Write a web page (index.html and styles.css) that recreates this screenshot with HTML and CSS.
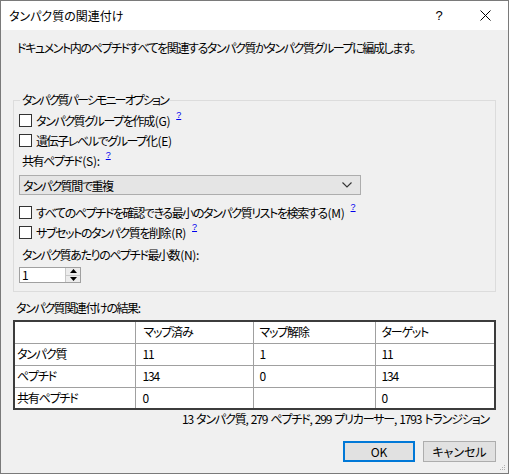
FILE: index.html
```html
<!DOCTYPE html>
<html lang="ja">
<head>
<meta charset="utf-8">
<title>タンパク質の関連付け</title>
<link rel="stylesheet" href="styles.css">
</head>
<body>
<div class="window">
  <div class="titlebar">
    <div class="title">タンパク質の関連付け</div>
    <div class="tb-btn help">?</div>
    <div class="tb-btn close">
      <svg width="11" height="11" viewBox="0 0 11 11"><path d="M0.5 0.5 L10.5 10.5 M10.5 0.5 L0.5 10.5" stroke="#000" stroke-width="1" fill="none"/></svg>
    </div>
  </div>
  <div class="content">
    <p class="desc">ドキュメント内のペプチドすべてを関連するタンパク質かタンパク質グループに編成します。</p>

    <fieldset class="group">
      <legend>タンパク質パーシモニーオプション</legend>
      <div class="cb-row r1"><span class="cb"></span><span>タンパク質グループを作成<span class="acc">(G)</span></span><a class="hl">?</a></div>
      <div class="cb-row"><span class="cb"></span><span>遺伝子レベルでグループ化<span class="acc">(E)</span></span></div>
      <div class="label-row">共有ペプチド<span class="acc">(S):</span><a class="hl">?</a></div>
      <div class="select">
        <span>タンパク質間で重複</span>
        <svg class="chev" width="10" height="6" viewBox="0 0 10 6"><path d="M0.5 0.5 L5 5 L9.5 0.5" stroke="#333" stroke-width="1.1" fill="none"/></svg>
      </div>
      <div class="cb-row r3"><span class="cb"></span><span>すべてのペプチドを確認できる最小のタンパク質リストを検索する<span class="acc">(M)</span></span><a class="hl">?</a></div>
      <div class="cb-row"><span class="cb"></span><span>サブセットのタンパク質を削除<span class="acc">(R)</span></span><a class="hl">?</a></div>
      <div class="label-row r5">タンパク質あたりのペプチド最小数<span class="acc">(N):</span></div>
      <div class="spin">
        <span class="spin-val">1</span>
        <span class="spin-btns">
          <span class="sb"><svg width="7" height="4" viewBox="0 0 7 4"><path d="M3.5 0 L7 4 L0 4 Z" fill="#000"/></svg></span>
          <span class="sb"><svg width="7" height="4" viewBox="0 0 7 4"><path d="M0 0 L7 0 L3.5 4 Z" fill="#000"/></svg></span>
        </span>
      </div>
    </fieldset>

    <div class="results-label">タンパク質関連付けの結果:</div>
    <table class="results">
      <tr><td></td><td>マップ済み</td><td>マップ解除</td><td>ターゲット</td></tr>
      <tr><td>タンパク質</td><td>11</td><td>1</td><td>11</td></tr>
      <tr><td>ペプチド</td><td>134</td><td>0</td><td>134</td></tr>
      <tr><td>共有ペプチド</td><td>0</td><td></td><td>0</td></tr>
    </table>
    <div class="summary">13 タンパク質, 279 ペプチド, 299 プリカーサー, 1793 トランジション</div>

    <div class="buttons">
      <div class="btn ok">OK</div>
      <div class="btn">キャンセル</div>
    </div>
  </div>
  <svg class="grip" width="6" height="6" viewBox="0 0 6 6">
    <rect x="4" y="0" width="1" height="1" fill="#b0b0b0"/>
    <rect x="2" y="2" width="1" height="1" fill="#b0b0b0"/>
    <rect x="4" y="2" width="1" height="1" fill="#b0b0b0"/>
    <rect x="0" y="4" width="1" height="1" fill="#b0b0b0"/>
    <rect x="2" y="4" width="1" height="1" fill="#b0b0b0"/>
    <rect x="4" y="4" width="1" height="1" fill="#b0b0b0"/>
  </svg>
</div>
</body>
</html>
```
FILE: styles.css
```css
* { box-sizing: border-box; }
html, body { margin: 0; padding: 0; }
body {
  width: 509px;
  height: 474px;
  font-family: "Noto Sans CJK JP", "Noto Sans", sans-serif;
  font-size: 12px;
  font-feature-settings: "palt";
  color: #000;
  background: #f0f0f0;
}
.window {
  position: relative;
  width: 509px;
  height: 474px;
  border: 1px solid #7a7a7a;
  background: #f0f0f0;
  display: flex;
  flex-direction: column;
}
.titlebar {
  height: 29px;
  background: #fff;
  display: flex;
  align-items: center;
  flex: none;
}
.title {
  flex: 1;
  padding-left: 8px;
  line-height: 29px;
}
.tb-btn {
  width: 46px;
  height: 29px;
  display: flex;
  align-items: center;
  justify-content: center;
}
.help { font-size: 13px; font-family: "Liberation Sans", sans-serif; }
.content {
  flex: 1;
  padding: 0 12px 0 12px;
  display: flex;
  flex-direction: column;
  letter-spacing: -1.4px;
}
.acc { letter-spacing: -0.3px; margin-left: 1px; }
.desc {
  margin: 9px 0 0 4px;
  line-height: 18px;
}
.group {
  margin: 36px 0 0 0;
  padding: 0 5px 8px 5px;
  border: 1px solid #dcdcdc;
  min-width: 0;
}
.group legend {
  padding: 0 2px;
  margin-left: 1px;
  line-height: 14px;
  letter-spacing: -1.9px;
}
.cb-row {
  height: 20px;
  display: flex;
  align-items: center;
  white-space: nowrap;
}
.cb-row.r1 { margin-top: 3px; }
.cb-row.r3 { margin-top: 7px; }
.cb {
  width: 13px;
  height: 13px;
  border: 1px solid #333;
  background: #fff;
  margin-right: 4px;
  flex: none;
}
.hl {
  color: #0000ee;
  text-decoration: underline;
  font-size: 9px;
  font-family: "Liberation Sans", sans-serif;
  letter-spacing: 0;
  margin-left: 6px;
  align-self: flex-start;
  line-height: 10px;
}
.label-row {
  height: 20px;
  display: flex;
  align-items: center;
  padding-left: 3px;
}
.label-row.r5 { margin-top: 2px; }
.select {
  margin-top: 5px;
  width: 342px;
  height: 20px;
  background: #e5e5e5;
  border: 1px solid #adadad;
  display: flex;
  align-items: center;
  justify-content: space-between;
  padding: 0 8px 0 3px;
}
.spin {
  margin-top: 3px;
  width: 62px;
  height: 16px;
  border: 1px solid #a0a0a0;
  background: #fff;
  display: flex;
}
.spin-val {
  flex: 1;
  line-height: 14px;
  padding-left: 2px;
}
.spin-btns {
  width: 15px;
  display: flex;
  flex-direction: column;
  border-left: 1px solid #c8c8c8;
}
.sb {
  flex: 1;
  display: flex;
  align-items: center;
  justify-content: center;
  background: #ececec;
}
.sb + .sb { border-top: 1px solid #c8c8c8; }
.results-label {
  margin: 6px 0 0 3px;
  line-height: 20px;
}
.results {
  margin-top: 2px;
  width: 483px;
  border-collapse: collapse;
  border: 2px solid #3c3c3c;
  background: #fff;
  table-layout: fixed;
}
.results td {
  border: 1px solid #a0a0a0;
  height: 22px;
  padding: 0 0 0 3px;
  line-height: 18px;
  white-space: nowrap;
  letter-spacing: -1.2px;
}
.results td:nth-child(1) { width: 121px; padding-left: 2px; }
.results td:nth-child(2) { width: 118px; padding-left: 7px; }
.results td:nth-child(3) { width: 122px; padding-left: 6px; }
.results td:nth-child(4) { padding-left: 6px; }
.results tr:first-child td:nth-child(2) { padding-left: 8px; }
.summary {
  margin-top: 0;
  text-align: right;
  padding-right: 7px;
  line-height: 18px;
  letter-spacing: -1.15px;
  word-spacing: 1.5px;
}
.buttons {
  margin-top: 13px;
  display: flex;
  justify-content: flex-end;
  gap: 8px;
  letter-spacing: 0;
}
.btn {
  width: 73px;
  height: 21px;
  background: #e1e1e1;
  border: 1px solid #adadad;
  display: flex;
  align-items: center;
  justify-content: center;
}
.btn.ok { border: 2px solid #0078d7; width: 72px; }
.grip {
  position: absolute;
  right: 2px;
  bottom: 2px;
}
```
